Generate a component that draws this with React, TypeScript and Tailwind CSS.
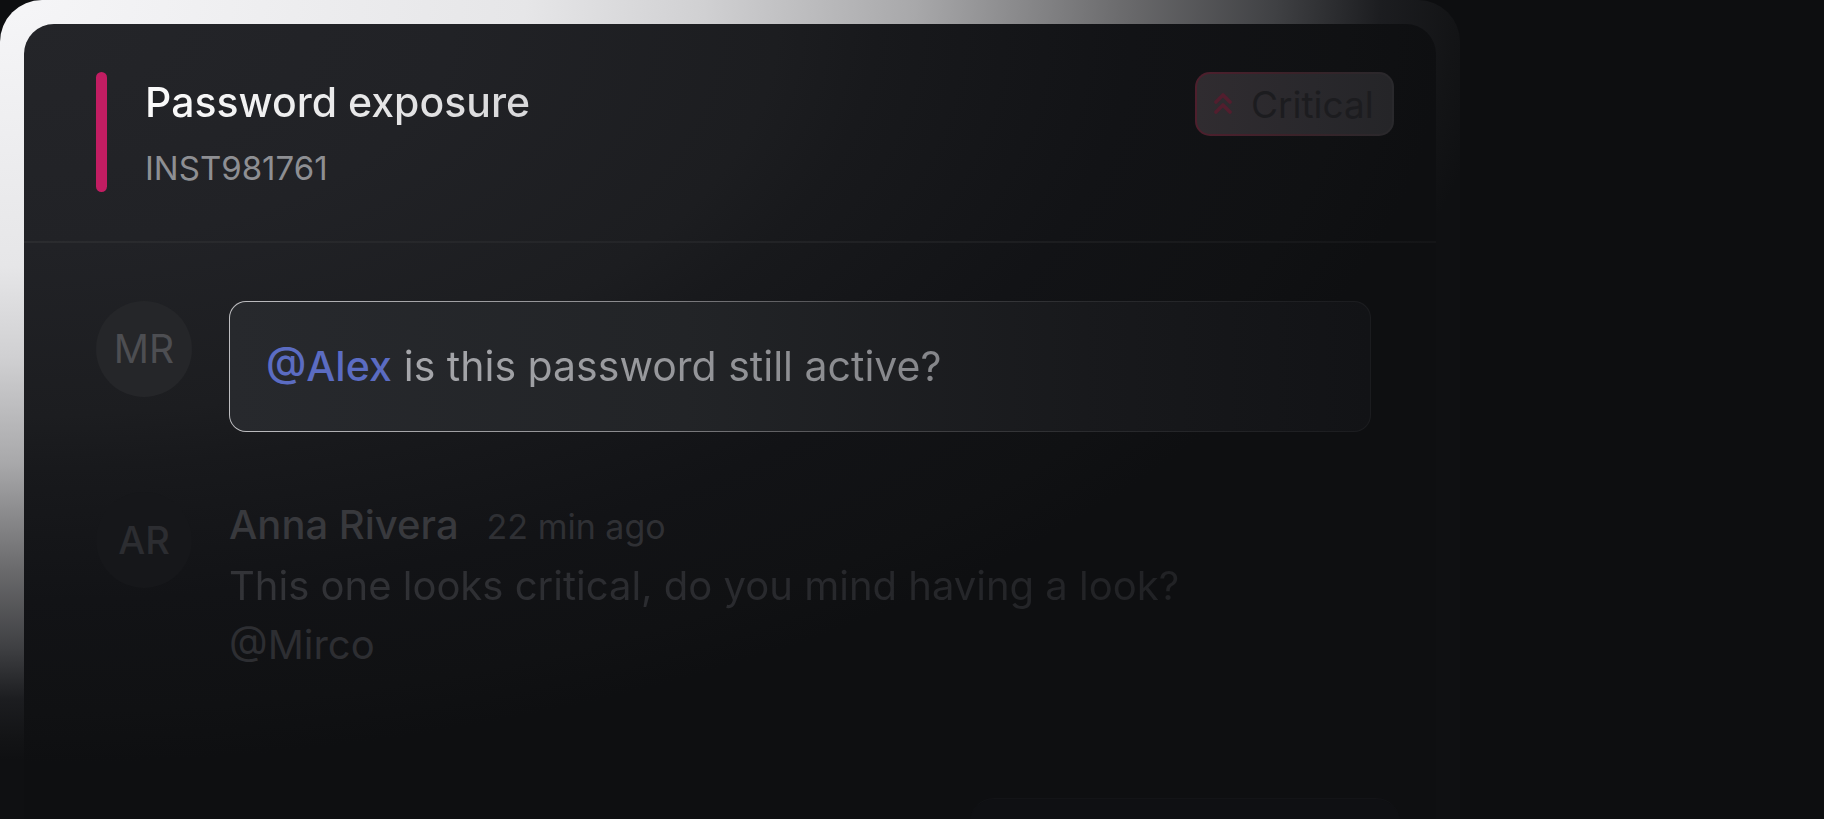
export default function App() {
  return (
    <div className="w-[1824px] h-[819px] overflow-hidden bg-[#0d0e10] font-['Inter','Noto_Sans',sans-serif]">
      {/* outer frame */}
      <div className="w-[1460px] h-[900px] rounded-[42px] p-6 bg-[radial-gradient(ellipse_1500px_760px_at_0_0,#f6f6f8_0%,#e6e6e8_35%,#d0d0d2_47%,#a8a8aa_61%,#6a6a6c_75%,#404144_85%,#1c1d20_92%,#131416_97%,#0f1012_100%)]">
        {/* card */}
        <div className="h-full rounded-[30px] flex flex-col bg-[radial-gradient(ellipse_1420px_740px_at_0_0,#242529_0%,#212226_30%,#1c1d20_53%,#18191c_60%,#121316_78%,#101113_93%,#0e0f11_100%)]">
          {/* header */}
          <div className="flex items-start justify-between pl-[72px] pr-[42px] pt-12 pb-[49px]">
            <div className="flex gap-[38px]">
              <div className="w-[11px] h-[120px] rounded-full bg-[#c21d62]" />
              <div className="flex flex-col pt-[2px]">
                <div className="text-[41px] leading-[56px] font-medium bg-[linear-gradient(to_right,#fbfbfb,#d8d8da)] bg-clip-text text-transparent">
                  Password exposure
                </div>
                <div className="mt-[14px] text-[33px] leading-[48px] text-[#8e8f93]">
                  INST981761
                </div>
              </div>
            </div>
            <div className="rounded-[15px] p-[2px] bg-[linear-gradient(to_right,#4e1f2d,#3a2229_50%,#29292c)]">
              <div className="w-[195px] h-[60px] rounded-[13px] flex items-center gap-[18px] pl-[16px] bg-[linear-gradient(to_right,#302c30,#29282c_60%,#252528)]">
                <svg width="20" height="26" viewBox="0 0 20 26" fill="none" stroke="#521e2e" strokeWidth="3.8" strokeLinecap="round" strokeLinejoin="round">
                  <path d="M3 11 L10 4 L17 11" />
                  <path d="M3 21 L10 14 L17 21" />
                </svg>
                <span className="text-[37px] leading-none text-[#1c1c1f]">Critical</span>
              </div>
            </div>
          </div>

          <div className="h-[2px] bg-[linear-gradient(to_right,#2b2c2f,#232427_50%,#141517)]" />

          {/* comments */}
          <div className="flex flex-col gap-[60px] pl-[72px] pr-[65px] pt-[58px]">
            <div className="flex items-start gap-[37px]">
              <div className="w-24 h-24 shrink-0 rounded-full bg-[#252629] flex items-center justify-center text-[39px] text-[#4d4e52]">
                MR
              </div>
              <div className="flex-1 rounded-[17px] p-px bg-[linear-gradient(to_right,#bdbdc0,#8a8a8d_35%,#4a4a4d_55%,#2a2b2e_75%,#1b1c1f)]">
                <div className="h-[129px] rounded-[16px] flex items-center px-9 bg-[linear-gradient(to_right,#27292d,#222427_40%,#18191c_75%,#121316)]">
                  <span className="text-[41px] leading-none font-medium text-[#5b6cc2]">@Alex</span>
                  <span className="ml-[12px] text-[41px] leading-none bg-[linear-gradient(to_right,#a6a7ab,#85868a)] bg-clip-text text-transparent">
                    is this password still active?
                  </span>
                </div>
              </div>
            </div>

            <div className="flex items-start gap-[37px]">
              <div className="w-24 h-24 shrink-0 rounded-full bg-[#16171a] flex items-center justify-center text-[38px] font-medium text-[#2c2d31]">
                AR
              </div>
              <div className="flex flex-col pt-[4px]">
                <div className="flex items-baseline gap-[28px] leading-[58px]">
                  <span className="text-[40px] font-medium text-[#38393d]">Anna Rivera</span>
                  <span className="text-[34px] text-[#2f3034]">22 min ago</span>
                </div>
                <div className="text-[40px] leading-[59px] bg-[linear-gradient(to_right,#333438,#2a2b2f_50%,#212225)] bg-clip-text text-transparent">
                  This one looks critical, do you mind having a look?
                </div>
                <div className="text-[40px] leading-[59px] text-[#2d2e32]">@Mirco</div>
              </div>
            </div>
          </div>

          {/* faint input edge at the bottom */}
          <div className="mt-[124px] flex justify-end pr-9">
            <div className="w-[430px] h-[40px] rounded-t-[24px] bg-[#0f1013] border-t border-[#131417]" />
          </div>
        </div>
      </div>
    </div>
  );
}
